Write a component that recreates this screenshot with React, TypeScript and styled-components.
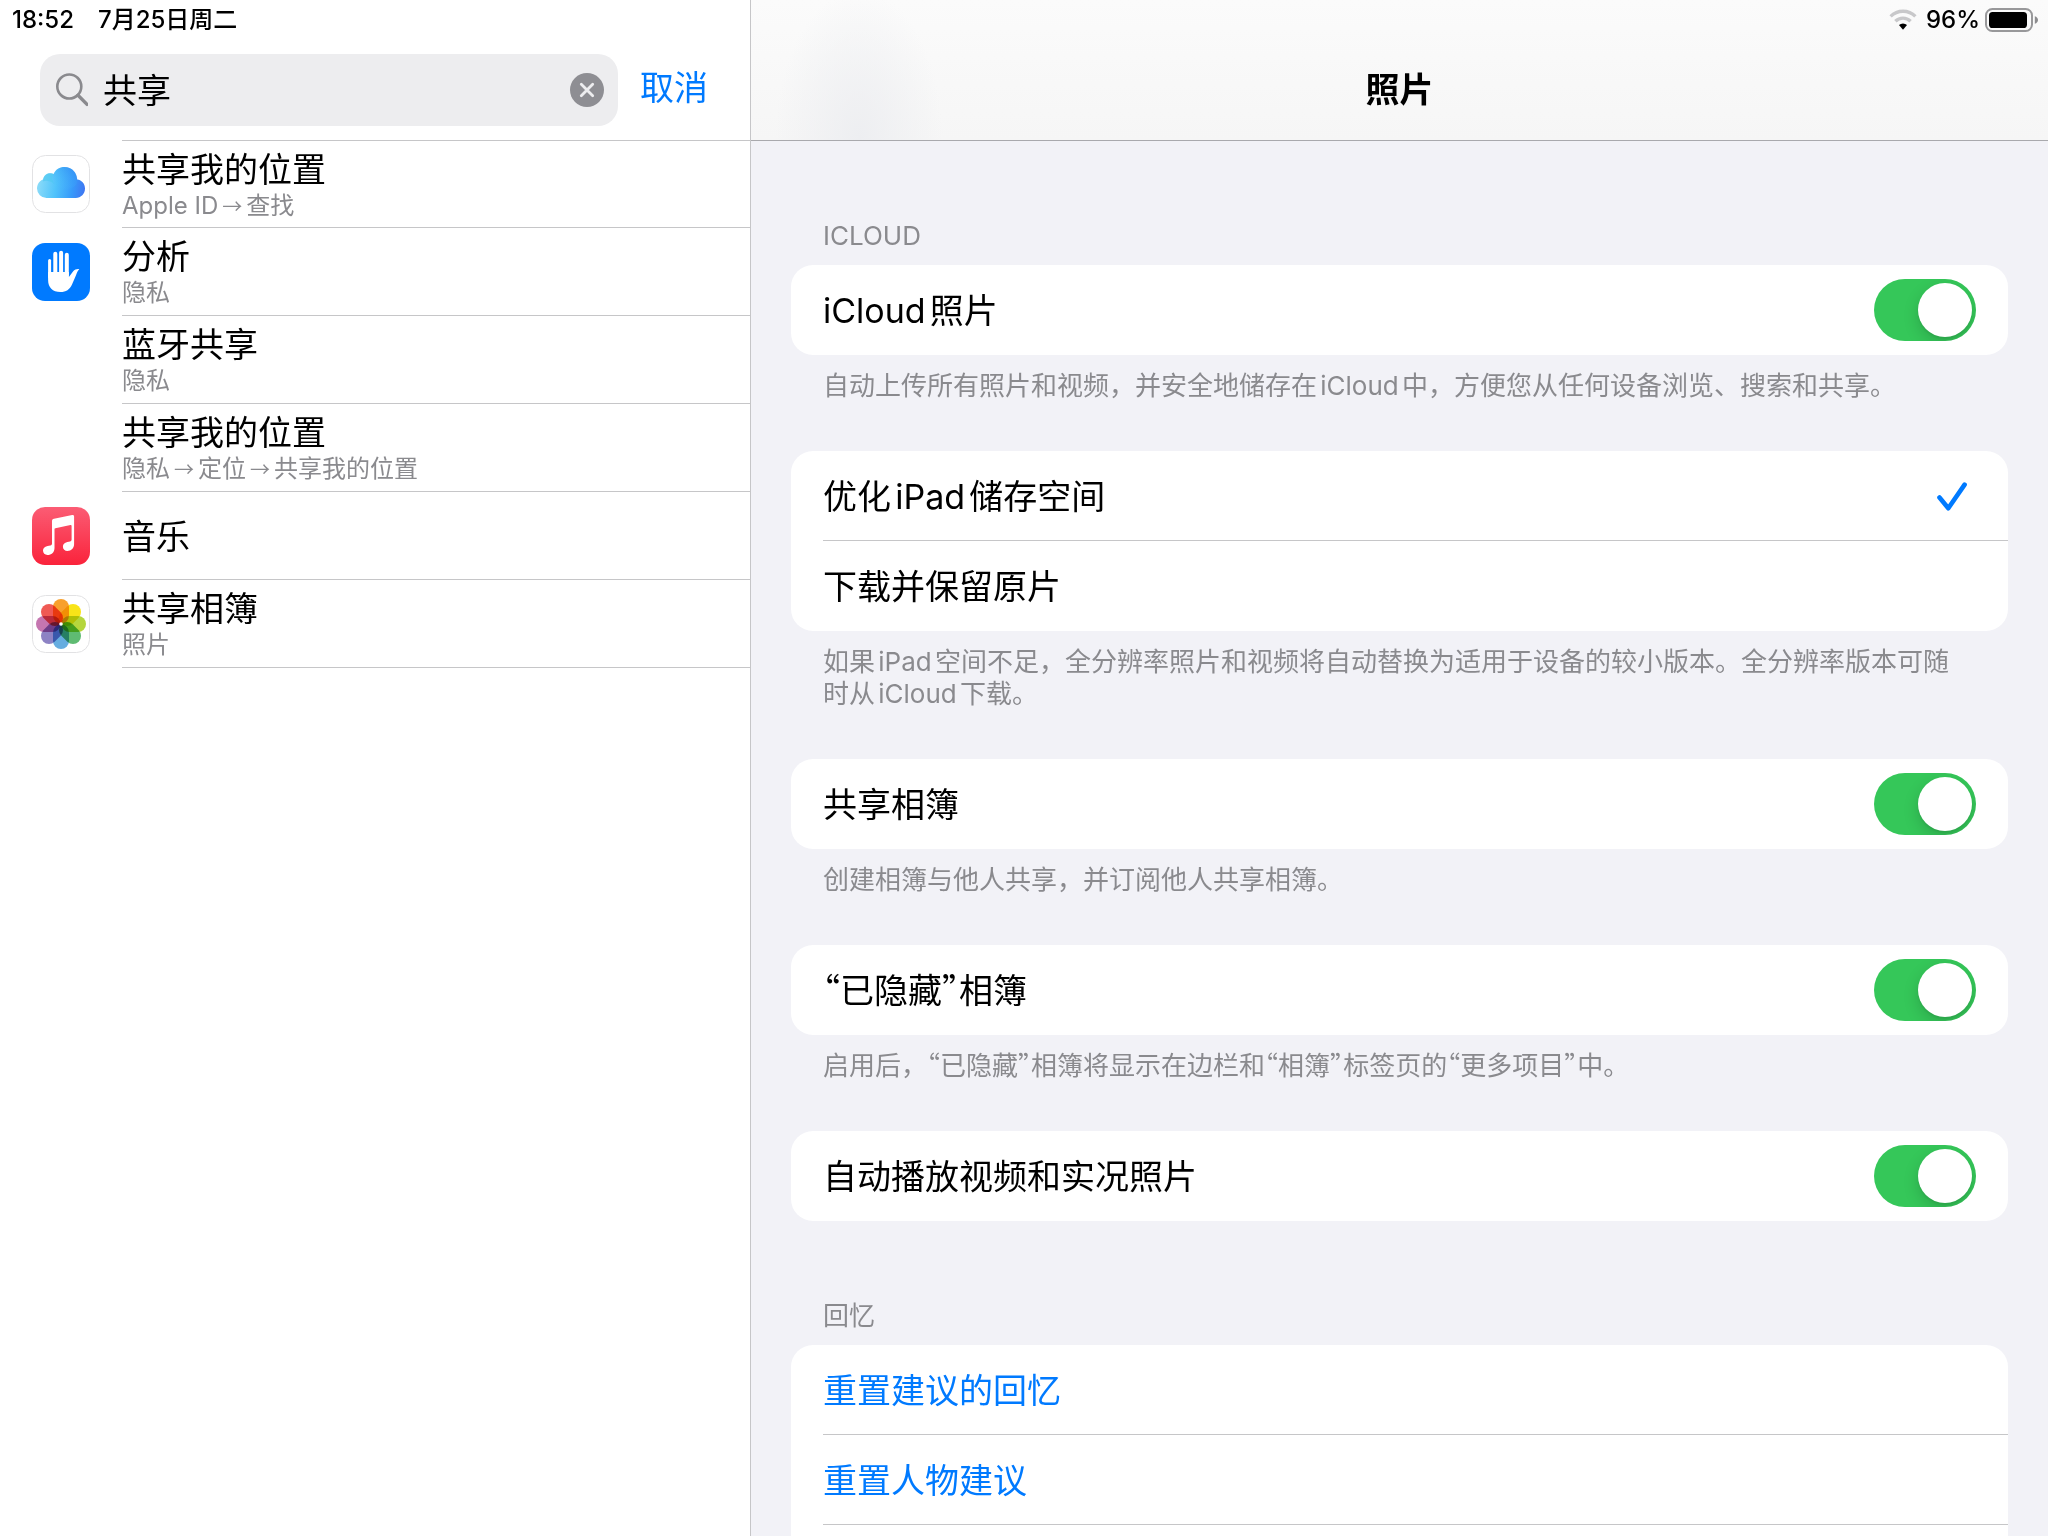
import React, { useState } from "react";
import styled, { createGlobalStyle, css } from "styled-components";

const color = {
  blue: "#007aff",
  green: "#35c759",
  gray: "#8a8a8e",
  line: "#c6c6c8",
  page: "#f2f2f7",
};

const GlobalStyle = createGlobalStyle`
  *, *::before, *::after { box-sizing: border-box; }
  body {
    margin: 0;
    overflow: hidden;
    background: ${color.page};
    color: #000;
    font-family: Inter, "Noto Sans CJK SC", sans-serif;
    font-size: 34px;
    line-height: 40px;
    text-autospace: normal;
  }
  button, input { font: inherit; color: inherit; border: 0; padding: 0; margin: 0; background: none; }
  h1, h2, p, ul { margin: 0; padding: 0; font: inherit; }
  a { color: inherit; text-decoration: none; }
  svg { display: block; flex: none; }
`;

const Shell = styled.div`
  display: flex;
  height: 100vh;
`;

const Sidebar = styled.aside`
  display: flex;
  flex-direction: column;
  flex: 0 0 751px;
  min-width: 0;
  background: #fff;
  border-right: 1px solid ${color.line};
`;

const StatusBar = styled.div<{ $end?: boolean }>`
  display: flex;
  align-items: center;
  justify-content: ${(p) => (p.$end ? "flex-end" : "flex-start")};
  gap: ${(p) => (p.$end ? "5px" : "24px")};
  height: 40px;
  padding: 0 ${(p) => (p.$end ? "10px" : "12px")};
  font-size: 24px;
  font-weight: 500;
  line-height: 32px;
  text-autospace: no-autospace;
`;

const SearchBar = styled.form`
  display: flex;
  align-items: center;
  gap: 22px;
  height: 100px;
  padding: 0 42px 0 40px;
`;

const SearchField = styled.div`
  display: flex;
  align-items: center;
  flex: 1;
  min-width: 0;
  gap: 15px;
  height: 72px;
  padding: 0 14px 0 16px;
  border-radius: 20px;
  background: #ededef;
`;

const SearchInput = styled.input`
  flex: 1;
  min-width: 0;
  width: 100%;
  height: 48px;
  padding-bottom: 4px;
  outline: 0;
`;

const IconButton = styled.button`
  flex: none;
  width: 34px;
  height: 34px;
  cursor: pointer;
`;

const TextButton = styled.button`
  flex: none;
  padding-bottom: 4px;
  color: ${color.blue};
  white-space: nowrap;
  cursor: pointer;
`;

const Results = styled.ul`
  list-style: none;
`;

const Result = styled.li`
  display: flex;
`;

const ResultLink = styled.a`
  display: flex;
  align-items: center;
  flex: 1;
  gap: 32px;
  height: 88px;
  padding-left: 32px;
`;

const IconSlot = styled.span`
  flex: none;
  width: 58px;
  height: 58px;
`;

const ResultText = styled.span`
  display: flex;
  flex-direction: column;
  justify-content: center;
  flex: 1;
  height: 88px;
  padding-top: 3px;
  border-bottom: 1px solid ${color.line};
  ${Result}:first-child & {
    border-top: 1px solid ${color.line};
  }
`;

const ResultPath = styled.span`
  display: flex;
  align-items: center;
  gap: 4px;
  color: ${color.gray};
  font-size: 24px;
  line-height: 32px;
`;

const Arrow = styled.span`
  font-family: "Noto Sans CJK SC", sans-serif;
  font-size: 20px;
`;

const Detail = styled.main`
  display: flex;
  flex-direction: column;
  flex: 1;
  min-width: 0;
  background: ${color.page};
`;

const NavBar = styled.header`
  flex: none;
  height: 141px;
  border-bottom: 1px solid #a9a9ad;
  background:
    radial-gradient(84px 150px at 108px 100%, #edeef1, rgba(238, 239, 242, 0)),
    linear-gradient(#fbfbfb, #f6f6f6);
`;

const NavTitle = styled.h1`
  display: flex;
  align-items: center;
  justify-content: center;
  height: 100px;
  font-weight: 600;
`;

const Scroller = styled.div`
  flex: 1;
  min-height: 0;
  overflow-y: auto;
  scrollbar-width: none;
  padding: 0 40px;
`;

const caption = css`
  padding-left: 32px;
  padding-right: 40px;
  color: ${color.gray};
  font-size: 26px;
  line-height: 32px;
`;

const GroupHeading = styled.h2`
  ${caption}
  padding-top: 79px;
  padding-bottom: 13px;
`;

const GroupNote = styled.p`
  ${caption}
  padding-top: 15px;
  padding-bottom: 49px;
`;

const Card = styled.div<{ $continues?: boolean }>`
  border-radius: 22px;
  background: #fff;
  padding-left: 32px;
  overflow: hidden;
  ${(p) => p.$continues && css`padding-bottom: 90px;`}
`;

const rowLayout = css`
  display: flex;
  align-items: center;
  justify-content: space-between;
  width: 100%;
  height: 90px;
  padding-right: 32px;
  text-align: left;
  cursor: pointer;
`;

const Row = styled.label`
  ${rowLayout}
  &:not(:last-child) {
    border-bottom: 1px solid ${color.line};
  }
`;

const ActionRow = styled.button`
  ${rowLayout}
  color: ${color.blue};
  border-bottom: 1px solid ${color.line};
`;

const RowLabel = styled.span`
  padding-top: 2px;
`;

const Quote = styled.span`
  font-family: "Noto Sans CJK SC", sans-serif;
  font-feature-settings: "halt";
  line-height: 1;
`;

const Switch = styled.input`
  appearance: none;
  display: flex;
  width: 102px;
  height: 62px;
  padding: 4px;
  border-radius: 31px;
  background: #e9e9ea;
  overflow: hidden;
  cursor: pointer;
  &::before {
    content: "";
    width: 54px;
    height: 54px;
    border-radius: 50%;
    background: #fff;
    box-shadow: 0 6px 16px rgba(0, 0, 0, 0.16), 0 2px 2px rgba(0, 0, 0, 0.06);
  }
  &:checked {
    justify-content: flex-end;
    background: ${color.green};
  }
`;

const Radio = styled.input`
  appearance: none;
  width: 0;
  height: 0;
  outline: 0;
`;

const Choice = styled.span`
  display: flex;
  align-items: center;
`;

const CheckSlot = styled.span`
  padding-right: 8px;
`;

const SearchIcon = () => (
  <svg width="32" height="34" viewBox="0 0 32 34" fill="none" stroke="#8a8a8e" strokeLinecap="round">
    <circle cx="13.3" cy="13.5" r="12" strokeWidth="2.6" />
    <path d="M22 22.3 31 31.4" strokeWidth="3.4" />
  </svg>
);

const ClearIcon = () => (
  <svg width="34" height="34" viewBox="0 0 34 34">
    <circle cx="17" cy="17" r="17" fill="#8e8e93" />
    <path d="M11.3 11.3 22.7 22.7M22.7 11.3 11.3 22.7" stroke="#ededef" strokeWidth="2.8" strokeLinecap="round" />
  </svg>
);

const CheckIcon = () => (
  <svg width="32" height="32" viewBox="0 0 32 32" fill="none">
    <path d="M3.5 17.5 12.3 28.2 28.6 4.6" stroke={color.blue} strokeWidth="4.6" strokeLinecap="round" strokeLinejoin="round" />
  </svg>
);

const WifiIcon = () => (
  <svg width="32" height="24" viewBox="0 0 32 24" fill="none">
    <path d="M1.6 8.4A17.6 17.6 0 0 1 26.4 8.4" stroke="#c8c8ca" strokeWidth="3.4" />
    <path d="M6.4 13.2A10.9 10.9 0 0 1 21.6 13.2" stroke="#c8c8ca" strokeWidth="3.4" />
    <path d="M10 17.1A5.8 5.8 0 0 1 18 17.1L14 21.8Z" fill="#000" />
  </svg>
);

const BatteryIcon = () => (
  <svg width="53" height="24" viewBox="0 0 53 24">
    <rect x="1" y="1" width="46" height="22" rx="6.4" fill="none" stroke="#98989a" strokeWidth="2" />
    <rect x="4" y="4" width="38" height="16" rx="3.6" fill="#000" />
    <path d="M49.8 8.2C51.8 8.8 53 10.2 53 12S51.8 15.2 49.8 15.8Z" fill="#8c8c8e" />
  </svg>
);

const CloudAppIcon = () => (
  <svg width="58" height="58" viewBox="0 0 58 58">
    <defs>
      <linearGradient id="cloud" x1="0" x2="1" y1="0.5" y2="0.6">
        <stop offset="0" stopColor="#8ddcf8" />
        <stop offset="0.4" stopColor="#50c3fb" />
        <stop offset="0.75" stopColor="#379afa" />
        <stop offset="1" stopColor="#3f77f2" />
      </linearGradient>
      <linearGradient id="puff" x1="0.2" x2="0.8" y1="1" y2="0">
        <stop offset="0" stopColor="#4cc0fb" stopOpacity="0" />
        <stop offset="1" stopColor="#2f88f2" />
      </linearGradient>
    </defs>
    <rect x="0.5" y="0.5" width="57" height="57" rx="13" fill="#fff" stroke="#e2e2e4" />
    <path
      d="M14.5 43A9.6 9.6 0 0 1 5 33.5C5 29 7.7 25.5 11 24.4C12 20.5 14.5 18.2 18 18.2C19.4 18.2 20.5 18.5 21.6 19C23.5 14.5 27.8 12 32.5 12C39.5 12 44.6 17 45.2 24.6C50 25.2 53 29 53 33.6C53 38.8 49 43 43.8 43Z"
      fill="url(#cloud)"
    />
    <path d="M20.4 26C20 18 25.5 12 32.5 12C40 12 45.3 18 45.3 25C45.3 31 40 34 33 34C26 34 21 32 20.4 26Z" fill="url(#puff)" opacity="0.6" />
    <path d="M11 26.5C11 21.5 14 18.2 18 18.2C20 18.2 21.3 18.7 22 19.2C19.5 22.2 20 26 22.5 29C18 26 14.5 25 11 26.5Z" fill="#4bc8ee" opacity="0.55" />
  </svg>
);

const PrivacyAppIcon = () => (
  <svg width="58" height="58" viewBox="0 0 58 58">
    <rect width="58" height="58" rx="13" fill={color.blue} />
    <g stroke="#fff" strokeLinecap="round" fill="none">
      <path d="M17.6 17.5V34" strokeWidth="3" />
      <path d="M23.3 10.8V32M29.1 9.8V32M34.8 11.8V32" strokeWidth="4" />
    </g>
    <path
      d="M16.1 29H36.9V34L41.2 28.2C42.8 26.4 45.2 25.6 47.3 26.1C46 27.6 45 29.5 44 32.2L40 41.5C37.8 46.5 34 49 28.5 49C20.5 49 16.1 44.5 16.1 37Z"
      fill="#fff"
    />
  </svg>
);

const MusicAppIcon = () => (
  <svg width="58" height="58" viewBox="0 0 58 58">
    <defs>
      <linearGradient id="music" x1="0" x2="0" y1="0" y2="1">
        <stop offset="0" stopColor="#fb5c74" />
        <stop offset="1" stopColor="#fa233b" />
      </linearGradient>
    </defs>
    <rect width="58" height="58" rx="13" fill="url(#music)" />
    <path
      d="M20 15V36.5C20 37.6 19.5 38.2 18.4 38.4L15.5 39C12.5 39.6 11 41.3 11 43.6C11 46.2 12.9 48 15.5 48C19.3 48 22.5 45.6 22.5 41V22.3C22.5 21.6 22.8 21.3 23.4 21.2L38.4 18C39.2 17.8 39.6 18.1 39.6 18.9V32.5C39.6 33.7 39 34.3 38 34.5L35.4 35C32.3 35.6 30.9 37.4 30.9 39.7C30.9 42.3 32.9 44 35.4 44C39.4 44 42.1 41 42.1 37V9.6C42.1 8.3 41.4 7.8 40.2 8L22 11.8C20.6 12.1 20 12.8 20 14Z"
      fill="#fff"
    />
  </svg>
);

const petals = ["#f8a02c", "#f9e418", "#b5d63d", "#5fbb72", "#66ade0", "#8d82c4", "#c576b0", "#ef5a54"];

const Bloom = styled.g`
  isolation: isolate;
  rect {
    mix-blend-mode: multiply;
  }
`;

const PhotosAppIcon = () => (
  <svg width="58" height="58" viewBox="0 0 58 58">
    <rect x="0.5" y="0.5" width="57" height="57" rx="13" fill="#fff" stroke="#e2e2e4" />
    <Bloom>
      {petals.map((fill, i) => (
        <rect key={fill} x="21" y="4" width="16" height="24.5" rx="8" fill={fill} transform={`rotate(${i * 45} 29 29)`} />
      ))}
    </Bloom>
    <circle cx="29" cy="29" r="1.8" fill="#fff" />
  </svg>
);

type ResultItem = { title: string; path: string[]; icon?: React.ReactNode };

const results: ResultItem[] = [
  { title: "共享我的位置", path: ["Apple ID", "查找"], icon: <CloudAppIcon /> },
  { title: "分析", path: ["隐私"], icon: <PrivacyAppIcon /> },
  { title: "蓝牙共享", path: ["隐私"] },
  { title: "共享我的位置", path: ["隐私", "定位", "共享我的位置"] },
  { title: "音乐", path: [], icon: <MusicAppIcon /> },
  { title: "共享相簿", path: ["照片"], icon: <PhotosAppIcon /> },
];

/* Chinese quotation marks are set half-width, in the CJK face. */
const Quoted = ({ text }: { text: string }) => (
  <>{text.split(/([“”])/).map((part, i) => (i % 2 ? <Quote key={i}>{part}</Quote> : part))}</>
);

const SwitchRow = ({ label }: { label: string }) => (
  <Row>
    <RowLabel>
      <Quoted text={label} />
    </RowLabel>
    <Switch type="checkbox" role="switch" defaultChecked />
  </Row>
);

const storageOptions = ["优化iPad储存空间", "下载并保留原片"];

export default function App() {
  const [query, setQuery] = useState("共享");
  const [storage, setStorage] = useState(0);

  return (
    <>
      <GlobalStyle />
      <Shell lang="zh-CN">
        <Sidebar>
          <StatusBar>
            <span>18:52</span>
            <span>7月25日周二</span>
          </StatusBar>
          <SearchBar onSubmit={(e) => e.preventDefault()}>
            <SearchField>
              <SearchIcon />
              <SearchInput aria-label="搜索" value={query} onChange={(e) => setQuery(e.target.value)} />
              <IconButton type="button" aria-label="清除" onClick={() => setQuery("")}>
                <ClearIcon />
              </IconButton>
            </SearchField>
            <TextButton type="button">取消</TextButton>
          </SearchBar>
          <Results>
            {results.map((item, i) => (
              <Result key={i}>
                <ResultLink href="#">
                  <IconSlot>{item.icon}</IconSlot>
                  <ResultText>
                    <span>{item.title}</span>
                    {item.path.length > 0 && (
                      <ResultPath>
                        {item.path.map((part, n) => (
                          <React.Fragment key={part}>
                            {n > 0 && <Arrow>→</Arrow>}
                            <span>{part}</span>
                          </React.Fragment>
                        ))}
                      </ResultPath>
                    )}
                  </ResultText>
                </ResultLink>
              </Result>
            ))}
          </Results>
        </Sidebar>

        <Detail>
          <NavBar>
            <StatusBar $end>
              <WifiIcon />
              <span>96%</span>
              <BatteryIcon />
            </StatusBar>
            <NavTitle>照片</NavTitle>
          </NavBar>
          <Scroller>
            <GroupHeading>ICLOUD</GroupHeading>
            <Card>
              <SwitchRow label="iCloud照片" />
            </Card>
            <GroupNote>自动上传所有照片和视频，并安全地储存在iCloud中，方便您从任何设备浏览、搜索和共享。</GroupNote>

            <Card>
              {storageOptions.map((label, i) => (
                <Row key={label}>
                  <Choice>
                    <Radio type="radio" name="storage" checked={storage === i} onChange={() => setStorage(i)} />
                    <RowLabel>{label}</RowLabel>
                  </Choice>
                  {storage === i && (
                    <CheckSlot>
                      <CheckIcon />
                    </CheckSlot>
                  )}
                </Row>
              ))}
            </Card>
            <GroupNote>
              如果iPad空间不足，全分辨率照片和视频将自动替换为适用于设备的较小版本。全分辨率版本可随时从iCloud下载。
            </GroupNote>

            <Card>
              <SwitchRow label="共享相簿" />
            </Card>
            <GroupNote>创建相簿与他人共享，并订阅他人共享相簿。</GroupNote>

            <Card>
              <SwitchRow label="“已隐藏”相簿" />
            </Card>
            <GroupNote>
              <Quoted text="启用后，“已隐藏”相簿将显示在边栏和“相簿”标签页的“更多项目”中。" />
            </GroupNote>

            <Card>
              <SwitchRow label="自动播放视频和实况照片" />
            </Card>

            <GroupHeading>回忆</GroupHeading>
            <Card $continues>
              <ActionRow type="button">
                <RowLabel>重置建议的回忆</RowLabel>
              </ActionRow>
              <ActionRow type="button">
                <RowLabel>重置人物建议</RowLabel>
              </ActionRow>
            </Card>
          </Scroller>
        </Detail>
      </Shell>
    </>
  );
}
